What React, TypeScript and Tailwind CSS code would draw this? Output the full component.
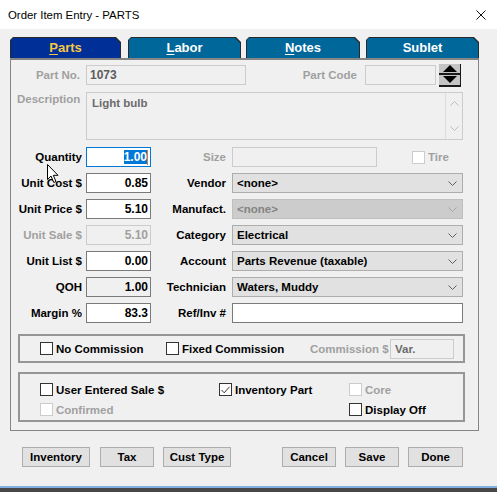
import React from 'react';

const font = "font-['Liberation_Sans',Arial,sans-serif]";

function Chevron() {
  return (
    <svg width="9" height="5" viewBox="0 0 9 5" className="shrink-0">
      <path d="M0.5 0.5 L4.5 4.5 L8.5 0.5" fill="none" stroke="#606060" strokeWidth="1" />
    </svg>
  );
}

function DisabledChevron() {
  return (
    <svg width="9" height="5" viewBox="0 0 9 5" className="shrink-0">
      <path d="M0.5 0.5 L4.5 4.5 L8.5 0.5" fill="none" stroke="#a8a8a8" strokeWidth="1" />
    </svg>
  );
}

function Select({ value, disabled }: { value: string; disabled?: boolean }) {
  return disabled ? (
    <div className="ml-[6px] flex h-[20px] w-[231px] items-center justify-between border border-[#bfbfbf] bg-[#cccccc] pl-[4px] pr-[5px] text-[#838383]">
      <span>{value}</span>
      <DisabledChevron />
    </div>
  ) : (
    <div className="ml-[6px] flex h-[20px] w-[231px] items-center justify-between border border-[#adadad] bg-[#e1e1e1] pl-[4px] pr-[5px] text-black">
      <span>{value}</span>
      <Chevron />
    </div>
  );
}

function Check({ label, checked, disabled }: { label: string; checked?: boolean; disabled?: boolean }) {
  return (
    <div className="flex h-[13px] items-center">
      {disabled ? (
        <div className="h-[13px] w-[13px] shrink-0 border border-[#cccccc] bg-white" />
      ) : (
        <div className="flex h-[13px] w-[13px] shrink-0 items-center justify-center border border-[#333333] bg-white">
          {checked && (
            <svg width="9" height="8" viewBox="0 0 9 8">
              <path d="M0.5 4 L3.2 6.8 L8.5 0.8" fill="none" stroke="#333" strokeWidth="1" />
            </svg>
          )}
        </div>
      )}
      <span className={disabled ? 'ml-[3px] whitespace-nowrap text-[#a0a0a0]' : 'ml-[3px] whitespace-nowrap text-black'}>{label}</span>
    </div>
  );
}

function Tab({ first, rest, active, className }: { first: string; rest: string; active?: boolean; className: string }) {
  return (
    <div className={className}>
      <div className="h-full bg-[#2a2a2a] px-px pt-px [clip-path:polygon(0_3px,3px_0,calc(100%_-_5px)_0,100%_5px,100%_100%,0_100%)]">
        {active ? (
          <div className="flex h-full items-center justify-center bg-[#002f97] text-[13px] font-bold text-[#f6c744] [clip-path:polygon(0_2px,2px_0,calc(100%_-_5px)_0,100%_5px,100%_100%,0_100%)]">
            <span className="underline underline-offset-2">{first}</span>
            <span>{rest}</span>
          </div>
        ) : (
          <div className="flex h-full items-center justify-center bg-[#00679b] text-[13px] font-bold text-white [clip-path:polygon(0_2px,2px_0,calc(100%_-_5px)_0,100%_5px,100%_100%,0_100%)]">
            <span className={first === 'S' ? '' : 'underline underline-offset-2'}>{first}</span>
            <span>{rest}</span>
          </div>
        )}
      </div>
    </div>
  );
}

function Button({ label, className }: { label: string; className: string }) {
  return (
    <div className={className}>
      <div className="flex h-[20px] w-full items-center justify-center border border-[#adadad] bg-[#e1e1e1] font-bold text-black">
        {label}
      </div>
    </div>
  );
}

export default function App() {
  return (
    <div className={`${font} relative h-[492px] w-[497px] overflow-hidden bg-[#f0f0f0] text-[11.5px] leading-[14px]`}>
      {/* Title bar */}
      <div className="flex h-[29px] items-center justify-between bg-white pl-[8px] pr-[11px]">
        <span className="text-[11.4px] font-normal text-black">Order Item Entry - PARTS</span>
        <svg width="10" height="10" viewBox="0 0 10 10">
          <path d="M0.5 0.5 L9.5 9.5 M9.5 0.5 L0.5 9.5" stroke="#111" strokeWidth="1" />
        </svg>
      </div>

      {/* Tabs */}
      <div className="ml-[10px] mt-[8px] flex h-[21px]">
        <Tab className="w-[111px]" first="P" rest="arts" active />
        <Tab className="ml-[7px] w-[113px]" first="L" rest="abor" />
        <Tab className="ml-[5px] w-[114px]" first="N" rest="otes" />
        <Tab className="ml-[6px] w-[113px]" first="S" rest="ublet" />
      </div>

      {/* Panel */}
      <div className="ml-[10px] w-[469px] border-x border-b border-t-2 border-[#858585] font-bold">
        {/* Part No row */}
        <div className="mt-[5px] flex h-[20px] items-center">
          <div className="w-[69px] text-right text-[#a0a0a0]">Part No.</div>
          <div className="ml-[6px] flex h-[20px] w-[160px] items-center border border-[#cccccc] bg-[#f0f0f0] pl-[3px] text-[12px] text-[#5c5c5c]">1073</div>
          <div className="w-[111px] text-right text-[#a0a0a0]">Part Code</div>
          <div className="ml-[8px] h-[20px] w-[71px] border border-[#cccccc] bg-[#f0f0f0]" />
          <div className="ml-[3px] flex h-[23px] w-[22px] flex-col">
            <div className="flex h-[11px] items-center justify-center border-b-2 border-r border-[#1a1a1a] bg-[#c4c4c4]">
              <svg width="14" height="7" viewBox="0 0 14 7">
                <path d="M7 0 L14 7 L0 7 Z" fill="#000" />
              </svg>
            </div>
            <div className="flex h-[12px] items-center justify-center border-b-2 border-r border-[#1a1a1a] bg-[#c4c4c4]">
              <svg width="14" height="7" viewBox="0 0 14 7">
                <path d="M0 0 L14 0 L7 7 Z" fill="#000" />
              </svg>
            </div>
          </div>
        </div>

        {/* Description row */}
        <div className="mt-[7px] flex h-[48px] items-start">
          <div className="w-[75px] pl-[6px] text-[#a0a0a0]">Description</div>
          <div className="flex h-[48px] w-[377px] border border-[#cccccc] bg-[#f0f0f0]">
            <div className="flex-1 pl-[5px] pt-[3px] text-[#6b6b6b]">Light bulb</div>
            <div className="flex w-[17px] flex-col items-center justify-between border-l border-[#dcdcdc] py-[8px]">
              <svg width="9" height="5" viewBox="0 0 9 5">
                <path d="M0.5 4.5 L4.5 0.5 L8.5 4.5" fill="none" stroke="#bdbdbd" strokeWidth="1" />
              </svg>
              <svg width="9" height="5" viewBox="0 0 9 5">
                <path d="M0.5 0.5 L4.5 4.5 L8.5 0.5" fill="none" stroke="#bdbdbd" strokeWidth="1" />
              </svg>
            </div>
          </div>
        </div>

        {/* Quantity row */}
        <div className="relative mt-[7px] flex h-[20px] items-center">
          <div className="w-[71px] text-right text-black">Quantity</div>
          <div className="ml-[4px] flex h-[20px] w-[65px] items-center justify-end border border-[#0078d7] bg-white pr-[2px] text-[12px]">
            <span className="bg-[#0078d7] text-white">1.00</span>
            <span className="h-[15px] w-px bg-[#e07a2a]" />
          </div>
          <div className="w-[75px] text-right text-[#a0a0a0]">Size</div>
          <div className="ml-[6px] h-[20px] w-[145px] border border-[#cccccc] bg-[#f0f0f0]" />
          <div className="ml-[35px]">
            <Check label="Tire" disabled />
          </div>
          <svg className="absolute left-[36px] top-[17px]" width="13" height="20" viewBox="0 0 13 20">
            <path d="M0.5 0.5 L0.5 15.5 L4 12 L6.8 18.5 L9 17.5 L6.3 11.3 L11 11.3 Z" fill="#fff" stroke="#000" strokeWidth="1" />
          </svg>
        </div>

        {/* Unit Cost row */}
        <div className="mt-[6px] flex h-[20px] items-center">
          <div className="w-[71px] text-right text-black">Unit Cost $</div>
          <div className="ml-[4px] flex h-[20px] w-[65px] items-center justify-end border border-[#7a7a7a] bg-white pr-[2px] text-[12px] text-black">0.85</div>
          <div className="w-[75px] text-right text-black">Vendor</div>
          <Select value="<none>" />
        </div>

        {/* Unit Price row */}
        <div className="mt-[6px] flex h-[20px] items-center">
          <div className="w-[71px] text-right text-black">Unit Price $</div>
          <div className="ml-[4px] flex h-[20px] w-[65px] items-center justify-end border border-[#7a7a7a] bg-white pr-[2px] text-[12px] text-black">5.10</div>
          <div className="w-[75px] text-right text-black">Manufact.</div>
          <Select value="<none>" disabled />
        </div>

        {/* Unit Sale row */}
        <div className="mt-[6px] flex h-[20px] items-center">
          <div className="w-[71px] text-right text-[#a0a0a0]">Unit Sale $</div>
          <div className="ml-[4px] flex h-[20px] w-[65px] items-center justify-end border border-[#cccccc] bg-[#f0f0f0] pr-[2px] text-[12px] text-[#a0a0a0]">5.10</div>
          <div className="w-[75px] text-right text-black">Category</div>
          <Select value="Electrical" />
        </div>

        {/* Unit List row */}
        <div className="mt-[6px] flex h-[20px] items-center">
          <div className="w-[71px] text-right text-black">Unit List $</div>
          <div className="ml-[4px] flex h-[20px] w-[65px] items-center justify-end border border-[#7a7a7a] bg-white pr-[2px] text-[12px] text-black">0.00</div>
          <div className="w-[75px] text-right text-black">Account</div>
          <Select value="Parts Revenue (taxable)" />
        </div>

        {/* QOH row */}
        <div className="mt-[6px] flex h-[20px] items-center">
          <div className="w-[71px] text-right text-black">QOH</div>
          <div className="ml-[4px] flex h-[20px] w-[65px] items-center justify-end border border-[#7a7a7a] bg-[#f0f0f0] pr-[2px] text-[12px] text-black">1.00</div>
          <div className="w-[75px] text-right text-black">Technician</div>
          <Select value="Waters, Muddy" />
        </div>

        {/* Margin row */}
        <div className="mt-[6px] flex h-[20px] items-center">
          <div className="w-[71px] text-right text-black">Margin %</div>
          <div className="ml-[4px] flex h-[20px] w-[65px] items-center justify-end border border-[#7a7a7a] bg-white pr-[2px] text-[12px] text-black">83.3</div>
          <div className="w-[75px] text-right text-black">Ref/Inv #</div>
          <div className="ml-[6px] h-[20px] w-[231px] border border-[#7a7a7a] bg-white" />
        </div>

        {/* Commission group */}
        <div className="ml-[7px] mt-[11px] flex h-[29px] w-[447px] items-center border-2 border-[#969696] pl-[20px]">
          <div className="w-[126px]">
            <Check label="No Commission" />
          </div>
          <div className="w-[144px]">
            <Check label="Fixed Commission" />
          </div>
          <div className="w-[75px] whitespace-nowrap text-[#a0a0a0]">Commission $</div>
          <div className="ml-[5px] flex h-[20px] w-[64px] items-center border border-[#cccccc] bg-[#f0f0f0] pl-[4px] text-[#6b6b6b]">Var.</div>
        </div>

        {/* Flags group */}
        <div className="mb-[8px] ml-[7px] mt-[9px] flex h-[50px] w-[447px] flex-col gap-[7px] border-2 border-[#969696] pl-[20px] pt-[9px]">
          <div className="flex">
            <div className="w-[179px]">
              <Check label="User Entered Sale $" />
            </div>
            <div className="w-[130px]">
              <Check label="Inventory Part" checked />
            </div>
            <Check label="Core" disabled />
          </div>
          <div className="flex">
            <div className="w-[309px]">
              <Check label="Confirmed" disabled />
            </div>
            <Check label="Display Off" />
          </div>
        </div>
      </div>

      {/* Buttons */}
      <div className="mt-[16px] flex">
        <Button className="ml-[22px] w-[68px]" label="Inventory" />
        <Button className="ml-[10px] w-[54px]" label="Tax" />
        <Button className="ml-[9px] w-[68px]" label="Cust Type" />
        <Button className="ml-[51px] w-[54px]" label="Cancel" />
        <Button className="ml-[9px] w-[54px]" label="Save" />
        <Button className="ml-[9px] w-[55px]" label="Done" />
      </div>

      {/* Window bottom edge */}
      <div className="mt-[19px] h-[2px] bg-[#7fb0e0]" />
      <div className="h-[10px] bg-[#474747]" />
    </div>
  );
}
